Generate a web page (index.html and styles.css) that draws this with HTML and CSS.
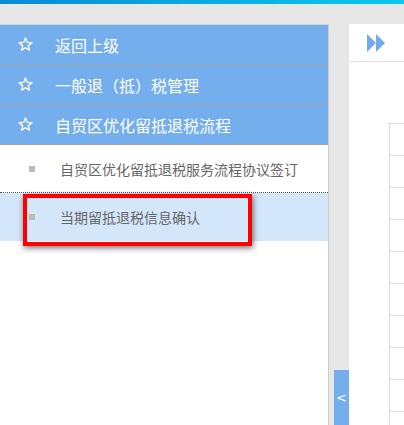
FILE: index.html
```html
<!DOCTYPE html>
<html lang="zh-CN">
<head>
<meta charset="utf-8">
<link rel="stylesheet" href="styles.css">
</head>
<body>
<div class="topbar"></div>
<div class="main">
  <div class="sidebar">
    <div class="menu-row">
      <svg class="star" viewBox="0 0 16 16" width="15" height="15"><polygon points="8,1.2 9.9,5.8 14.8,6.1 11,9.2 12.2,14 8,11.4 3.8,14 5,9.2 1.2,6.1 6.1,5.8" fill="none" stroke="#fff" stroke-width="1.4" stroke-linejoin="round"/></svg>
      <span>返回上级</span>
    </div>
    <div class="menu-row">
      <svg class="star" viewBox="0 0 16 16" width="15" height="15"><polygon points="8,1.2 9.9,5.8 14.8,6.1 11,9.2 12.2,14 8,11.4 3.8,14 5,9.2 1.2,6.1 6.1,5.8" fill="none" stroke="#fff" stroke-width="1.4" stroke-linejoin="round"/></svg>
      <span>一般退（抵）税管理</span>
    </div>
    <div class="menu-row">
      <svg class="star" viewBox="0 0 16 16" width="15" height="15"><polygon points="8,1.2 9.9,5.8 14.8,6.1 11,9.2 12.2,14 8,11.4 3.8,14 5,9.2 1.2,6.1 6.1,5.8" fill="none" stroke="#fff" stroke-width="1.4" stroke-linejoin="round"/></svg>
      <span>自贸区优化留抵退税流程</span>
    </div>
    <div class="sub-item dotted">
      <i class="bullet"></i>
      <span>自贸区优化留抵退税服务流程协议签订</span>
    </div>
    <div class="sub-item selected">
      <i class="bullet"></i>
      <span>当期留抵退税信息确认</span>
    </div>
    <div class="highlight"></div>
  </div>
  <div class="gutter">
    <div class="collapse">&lt;</div>
  </div>
  <div class="content">
    <div class="content-head">
      <svg width="18" height="18" viewBox="0 0 18 18"><polygon points="0,0 9,9 0,18" fill="#71aaee"/><polygon points="9,0 18,9 9,18" fill="#71aaee"/></svg>
    </div>
    <div class="grid">
      <div class="grid-row"></div>
      <div class="grid-row"></div>
      <div class="grid-row"></div>
      <div class="grid-row"></div>
      <div class="grid-row"></div>
      <div class="grid-row"></div>
      <div class="grid-row"></div>
      <div class="grid-row"></div>
      <div class="grid-row"></div>
      <div class="grid-row"></div>
    </div>
  </div>
</div>
</body>
</html>
```
FILE: styles.css
```css
html, body {
  margin: 0;
  padding: 0;
}
body {
  width: 404px;
  height: 425px;
  overflow: hidden;
  background: #e6e7e6;
  font-family: "Noto Sans CJK SC", "Microsoft YaHei", sans-serif;
}
.topbar {
  height: 4px;
  background: linear-gradient(to right, #0a8ad5, #0bc9f0);
}
.main {
  display: flex;
  margin-top: 20px;
  height: 401px;
}
.sidebar {
  position: relative;
  width: 328px;
  background: #fff;
  border-top: 1px solid #cfd6de;
  border-right: 1px solid #cccccc;
  box-sizing: content-box;
}
.menu-row {
  display: flex;
  align-items: center;
  height: 39px;
  background: #74aeec;
  border-bottom: 1px solid #a3a3a3;
  color: #fff;
  font-size: 16px;
}
.menu-row .star {
  margin-left: 18px;
  margin-right: 22px;
  flex: none;
}
.sub-item {
  display: flex;
  align-items: center;
  height: 48px;
  box-sizing: border-box;
  color: #666;
  font-size: 14px;
}
.sub-item.dotted {
  border-bottom: 1px dotted #555;
}
.sub-item.selected {
  background: #d3e6fa;
}
.bullet {
  width: 6px;
  height: 6px;
  background: #bbbbbb;
  margin-left: 29px;
  margin-right: 25px;
  flex: none;
}
.highlight {
  position: absolute;
  left: 23px;
  top: 169px;
  width: 221px;
  height: 44px;
  border: 4px solid #ff0000;
  box-shadow: 1px 2px 6px rgba(0, 0, 0, 0.55);
}
.gutter {
  width: 20px;
  display: flex;
  flex-direction: column;
  justify-content: flex-end;
  align-items: flex-end;
}
.collapse {
  width: 15px;
  height: 55px;
  background: #74aeec;
  color: #fff;
  font-size: 13px;
  display: flex;
  align-items: center;
  justify-content: center;
  font-family: "DejaVu Sans", sans-serif;
}
.content {
  flex: 1;
  background: #fff;
}
.content-head {
  height: 37px;
  border-bottom: 1px solid #e2e2e2;
  display: flex;
  align-items: center;
  padding-left: 18px;
}
.grid {
  margin-left: 40px;
  margin-top: 61px;
  border-left: 1px solid #dcdcdc;
}
.grid-row {
  height: 31px;
  border-top: 1px solid #dcdcdc;
}
```
